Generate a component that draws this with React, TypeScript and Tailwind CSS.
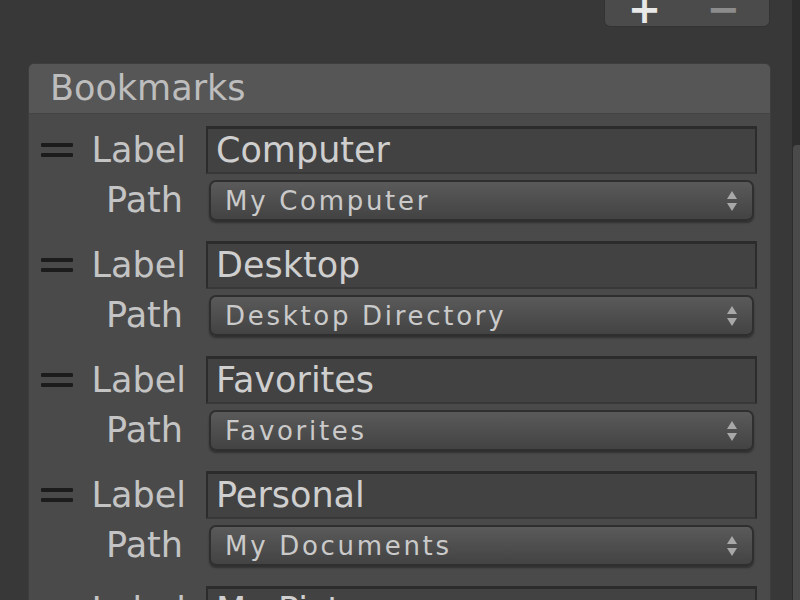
import React from 'react';

interface Bookmark {
  label: string;
  path: string;
}

const bookmarks: Bookmark[] = [
  { label: 'Computer', path: 'My Computer' },
  { label: 'Desktop', path: 'Desktop Directory' },
  { label: 'Favorites', path: 'Favorites' },
  { label: 'Personal', path: 'My Documents' },
  { label: 'My Pictures', path: 'My Pictures' },
];

function DragHandle() {
  return (
    <div className="flex flex-col gap-[6px] w-[32px]">
      <div className="h-[4px] bg-[#1c1c1c] rounded-[1px]" />
      <div className="h-[4px] bg-[#1c1c1c] rounded-[1px]" />
    </div>
  );
}

function UpDown() {
  return (
    <svg width="12" height="22" viewBox="0 0 12 22">
      <path d="M6 1 L11 9 L1 9 Z" fill="#a8a8a8" />
      <path d="M6 21 L11 13 L1 13 Z" fill="#a8a8a8" />
    </svg>
  );
}

function BookmarkRow({ label, path }: Bookmark) {
  return (
    <div className="flex">
      <div className="w-[177px] shrink-0 flex flex-col">
        <div className="h-[48px] flex items-center pl-[12px] pr-[20px]">
          <DragHandle />
          <span className="ml-auto text-[35px] leading-none text-[#c4c4c4]">Label</span>
        </div>
        <div className="h-[41px] mt-[6px] flex items-center justify-end pr-[23px]">
          <span className="text-[35px] leading-none text-[#c4c4c4]">Path</span>
        </div>
      </div>
      <div className="flex-1 mr-[13px] flex flex-col">
        <div className="h-[48px] bg-[#424242] border-2 border-t-[3px] border-[#2c2c2c] border-b-[#383838] flex items-center pl-[8px] overflow-hidden">
          <span className="text-[35px] leading-none text-[#cfcfcf] whitespace-nowrap">{label}</span>
        </div>
        <div className="h-[41px] mt-[6px] mx-[3px] rounded-[7px] border-2 border-[#2f2f2f] bg-gradient-to-b from-[#5a5a5a] to-[#434343] shadow-[0_2px_2px_rgba(0,0,0,0.35)] flex items-center pl-[14px] pr-[14px]">
          <span className="text-[26px] leading-none tracking-[2.7px] text-[#cacaca] whitespace-nowrap">{path}</span>
          <span className="ml-auto flex">
            <UpDown />
          </span>
        </div>
      </div>
    </div>
  );
}

export default function App() {
  return (
    <div className="w-[800px] h-[600px] overflow-hidden bg-[#383838] flex font-['DejaVu_Sans',sans-serif]">
      <div className="flex-1 flex flex-col pl-[28px] pr-[21px]">
        <div className="h-[63px] shrink-0 flex justify-end">
          <div className="w-[166px] h-[27px] mr-[1px] bg-[#4b4b4b] rounded-b-[6px] border border-t-0 border-[#333] flex items-start justify-around pr-[6px]">
            <span className="text-[40px] leading-[20px] font-bold text-[#e8e8e8] -mt-[1px]">+</span>
            <span className="text-[40px] leading-[20px] font-bold text-[#8c8c8c] -mt-[1px]">−</span>
          </div>
        </div>
        <div className="flex-1 flex flex-col bg-[#4a4a4a] rounded-t-[6px] border-l border-r border-t border-[#3e3e3e] overflow-hidden">
          <div className="h-[50px] shrink-0 bg-[#565656] border-b border-[#444] flex items-center pl-[21px]">
            <span className="text-[35px] leading-none text-[#bdbdbd]">Bookmarks</span>
          </div>
          <div className="flex flex-col gap-[20px] pt-[12px]">
            {bookmarks.map((b, i) => (
              <BookmarkRow key={i} label={b.label} path={b.path} />
            ))}
          </div>
        </div>
      </div>
      <div className="w-[8px] shrink-0 bg-[#2d2d2d] flex flex-col">
        <div className="h-[145px] shrink-0" />
        <div className="flex-1 ml-[1px] bg-[#4a4a4a] rounded-tl-[4px]" />
      </div>
    </div>
  );
}
